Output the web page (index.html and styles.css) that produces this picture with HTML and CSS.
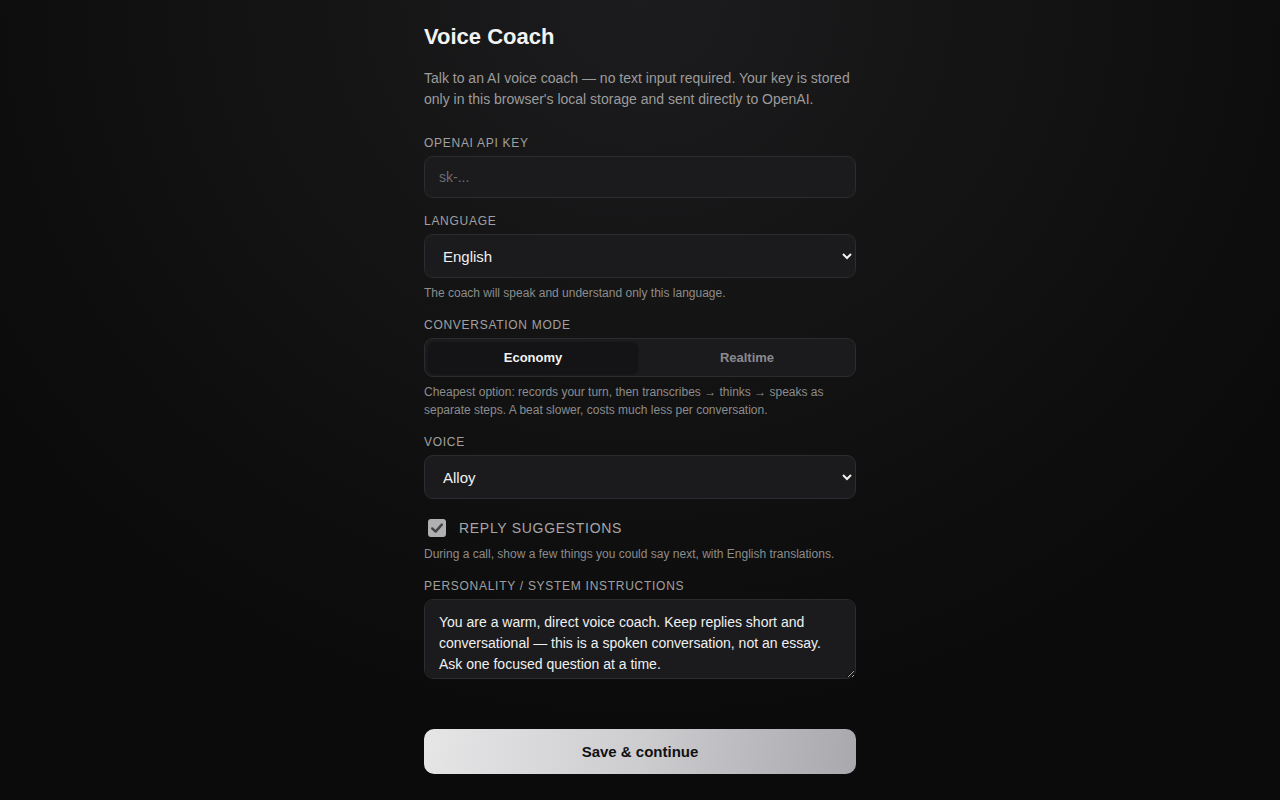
FILE: index.html
```html
<!DOCTYPE html>
<html lang="en">
<head>
<meta charset="utf-8">
<title>Voice Coach</title>
<link rel="stylesheet" href="styles.css">
</head>
<body>
<main class="page">
  <h1 class="title">Voice Coach</h1>
  <p class="intro">Talk to an AI voice coach — no text input required. Your key is stored only in this browser's local storage and sent directly to OpenAI.</p>

  <div class="field">
    <label class="label" for="key">OpenAI API key</label>
    <input class="control input" id="key" type="password" placeholder="sk-...">
  </div>

  <div class="field">
    <label class="label" for="lang">Language</label>
    <select class="control select" id="lang">
      <option>English</option>
    </select>
    <p class="hint">The coach will speak and understand only this language.</p>
  </div>

  <div class="field">
    <span class="label">Conversation mode</span>
    <div class="segmented">
      <button class="seg seg-active" type="button">Economy</button>
      <button class="seg" type="button">Realtime</button>
    </div>
    <p class="hint">Cheapest option: records your turn, then transcribes → thinks → speaks as separate steps. A beat slower, costs much less per conversation.</p>
  </div>

  <div class="field">
    <label class="label" for="voice">Voice</label>
    <select class="control select" id="voice">
      <option>Alloy</option>
    </select>
  </div>

  <div class="field">
    <label class="check-row">
      <span class="checkbox">
        <svg viewBox="0 0 18 18" width="18" height="18" aria-hidden="true"><path d="M4.2 9.4 L7.6 12.6 L13.8 5.6" fill="none" stroke="#444446" stroke-width="2.4" stroke-linecap="round" stroke-linejoin="round"/></svg>
      </span>
      <span class="check-label">Reply suggestions</span>
    </label>
    <p class="hint">During a call, show a few things you could say next, with English translations.</p>
  </div>

  <div class="field">
    <label class="label" for="sys">Personality / system instructions</label>
    <textarea class="control textarea" id="sys">You are a warm, direct voice coach. Keep replies short and conversational — this is a spoken conversation, not an essay. Ask one focused question at a time.</textarea>
  </div>

  <button class="primary" type="button">Save &amp; continue</button>
</main>
</body>
</html>
```

FILE: styles.css
```css
html, body {
  margin: 0;
  padding: 0;
}
body {
  min-height: 100vh;
  background: radial-gradient(ellipse 60% 90% at 50% 0%, #1c1c1e 0%, #141415 45%, #0b0b0c 100%);
  background-color: #0b0b0c;
  color: #ededed;
  font-family: "Liberation Sans", Arial, sans-serif;
  color-scheme: dark;
}
.page {
  width: 432px;
  margin: 0 auto;
  padding: 24px 0 26px;
  display: flex;
  flex-direction: column;
}
.title {
  margin: 0 0 18px;
  font-size: 22px;
  line-height: 26px;
  font-weight: 700;
  color: #f3f3f3;
}
.intro {
  margin: 0 0 26px;
  font-size: 14px;
  line-height: 21px;
  color: #9c9c9c;
}
.field {
  display: flex;
  flex-direction: column;
  margin-bottom: 16px;
}
.label {
  font-size: 12px;
  line-height: 14px;
  letter-spacing: 0.06em;
  text-transform: uppercase;
  color: #a0a0a0;
  margin-bottom: 6px;
}
.control {
  box-sizing: border-box;
  width: 100%;
  background: #1b1b1e;
  border: 1px solid #2c2c30;
  border-radius: 9px;
  color: #f0f0f0;
  font-family: "Liberation Sans", Arial, sans-serif;
  outline: none;
}
.input {
  height: 42px;
  padding: 0 14px;
  font-size: 14px;
}
.input::placeholder {
  color: #6c6c70;
}
.select {
  height: 44px;
  padding: 0 10px 0 14px;
  font-size: 15px;
}
.textarea {
  height: 80px;
  padding: 12px 14px 10px;
  font-size: 14px;
  line-height: 21px;
  resize: vertical;
  display: block;
}
.hint {
  margin: 6px 0 0;
  font-size: 12px;
  line-height: 18px;
  color: #8c8c8c;
}
.segmented {
  box-sizing: border-box;
  height: 39px;
  display: flex;
  gap: 4px;
  padding: 3px;
  background: #1b1b1e;
  border: 1px solid #2c2c30;
  border-radius: 9px;
}
.seg {
  flex: 1;
  border: none;
  background: transparent;
  border-radius: 7px;
  font-family: "Liberation Sans", Arial, sans-serif;
  font-size: 13px;
  font-weight: 700;
  color: #8a8a8e;
  cursor: pointer;
}
.seg-active {
  background: #141416;
  color: #f2f2f2;
  box-shadow: 0 1px 2px rgba(0, 0, 0, 0.4);
}
.check-row {
  display: flex;
  align-items: center;
  gap: 13px;
  padding: 3px 0 0 4px;
  height: 20px;
}
.checkbox {
  width: 18px;
  height: 18px;
  border-radius: 3px;
  background: #b0b0b2;
  display: flex;
}
.check-label {
  font-size: 14px;
  letter-spacing: 0.05em;
  text-transform: uppercase;
  color: #a6a6a6;
}
.check-row + .hint {
  margin-top: 7px;
}
.primary {
  margin-top: 34px;
  height: 45px;
  width: 100%;
  border: none;
  border-radius: 10px;
  background: linear-gradient(100deg, #e6e6e7 0%, #cdcdd0 50%, #a8a8ad 100%);
  color: #111113;
  font-family: "Liberation Sans", Arial, sans-serif;
  font-size: 15px;
  font-weight: 700;
  cursor: pointer;
}
```
